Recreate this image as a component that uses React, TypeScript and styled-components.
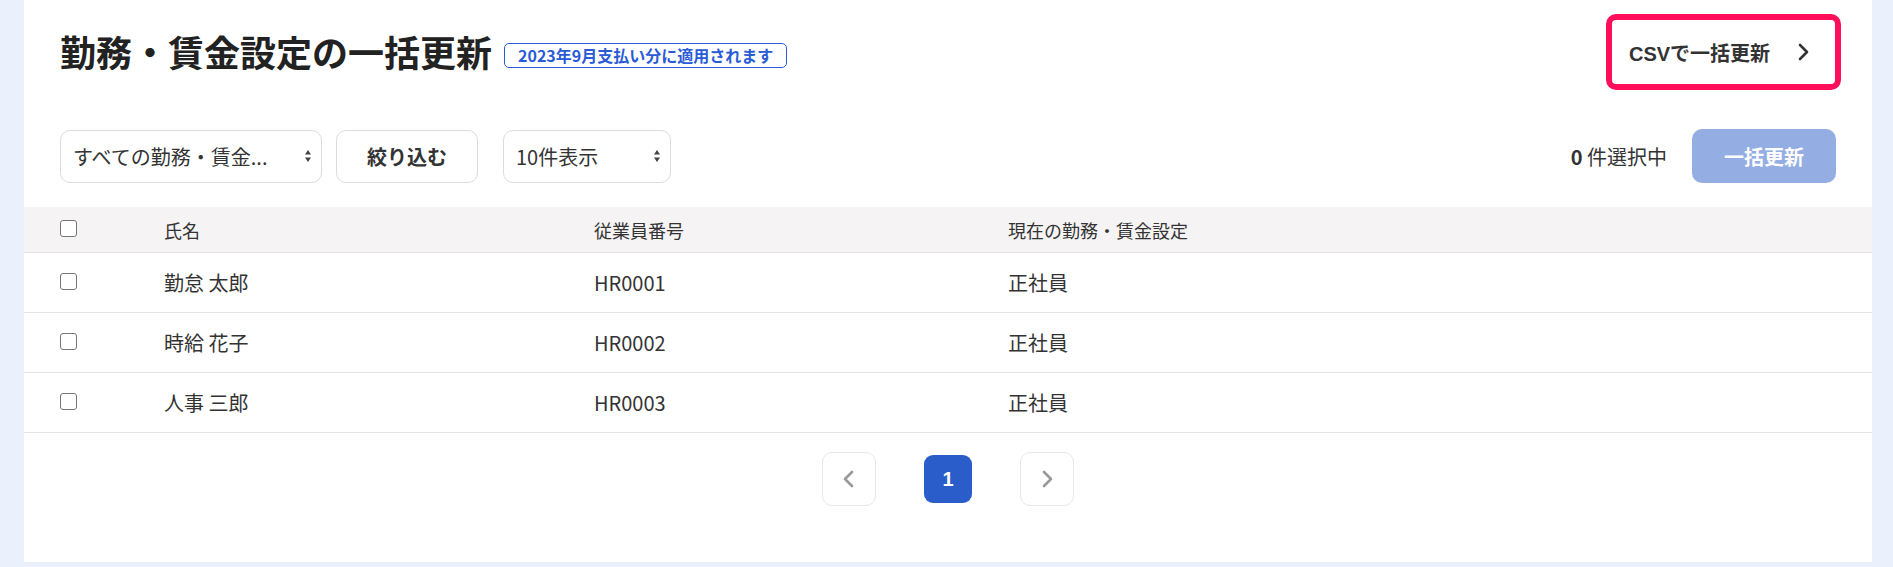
import styled, { createGlobalStyle } from 'styled-components';

const GlobalStyle = createGlobalStyle`
  body {
    margin: 0;
    background: #eaf1fc;
    font-family: 'Noto Sans CJK JP', 'Noto Sans', sans-serif;
    color: #333;
  }
`;

const employees = [
  { name: '勤怠 太郎', code: 'HR0001', setting: '正社員' },
  { name: '時給 花子', code: 'HR0002', setting: '正社員' },
  { name: '人事 三郎', code: 'HR0003', setting: '正社員' },
];

const SortIcon = () => (
  <svg width="8" height="14" viewBox="0 0 8 14">
    <path d="M4 1 L7 5.5 H1 Z" fill="#444" />
    <path d="M4 13 L7 8.5 H1 Z" fill="#444" />
  </svg>
);

const Chevron = ({ dir, color, w }: { dir: 'left' | 'right'; color: string; w: number }) => (
  <svg width="12" height="18" viewBox="0 0 12 18">
    <path
      d={dir === 'right' ? 'M3 2 L10 9 L3 16' : 'M9 2 L2 9 L9 16'}
      fill="none"
      stroke={color}
      strokeWidth={w}
      strokeLinecap="round"
      strokeLinejoin="round"
    />
  </svg>
);

const App = () => {
  return (
    <>
      <GlobalStyle />
      <Page>
        <Panel>
          <Header>
            <TitleBox>
              <Title>勤務・賃金設定の一括更新</Title>
              <Badge>2023年9月支払い分に適用されます</Badge>
            </TitleBox>
            <CsvButton>
              CSVで一括更新
              <Chevron dir="right" color="#333" w={2.6} />
            </CsvButton>
          </Header>

          <Toolbar>
            <Filters>
              <SelectBox $width={262}>
                <span>すべての勤務・賃金...</span>
                <SortIcon />
              </SelectBox>
              <FilterButton>絞り込む</FilterButton>
              <SelectBox $width={168} $last>
                <span>10件表示</span>
                <SortIcon />
              </SelectBox>
            </Filters>
            <Actions>
              <Count>
                <b>0</b> 件選択中
              </Count>
              <UpdateButton disabled>一括更新</UpdateButton>
            </Actions>
          </Toolbar>

          <Table>
            <HeadRow>
              <CheckCell>
                <Check />
              </CheckCell>
              <HeadCell>氏名</HeadCell>
              <HeadCell>従業員番号</HeadCell>
              <HeadCell>現在の勤務・賃金設定</HeadCell>
            </HeadRow>
            {employees.map((e) => (
              <Row key={e.code}>
                <CheckCell>
                  <Check />
                </CheckCell>
                <Cell>{e.name}</Cell>
                <Cell>{e.code}</Cell>
                <Cell>{e.setting}</Cell>
              </Row>
            ))}
          </Table>

          <Pagination>
            <PageArrow>
              <Chevron dir="left" color="#999" w={2.6} />
            </PageArrow>
            <PageNumber>1</PageNumber>
            <PageArrow>
              <Chevron dir="right" color="#999" w={2.6} />
            </PageArrow>
          </Pagination>
        </Panel>
      </Page>
    </>
  );
};

const Page = styled.div`
  padding: 0 21px 5px 24px;
`;

const Panel = styled.main`
  background: #fff;
  height: 562px;
  box-sizing: border-box;
  padding-top: 20px;
`;

const Header = styled.header`
  display: flex;
  justify-content: space-between;
  align-items: center;
  height: 64px;
  padding: 0 37px 0 36px;
`;

const TitleBox = styled.div`
  display: flex;
  align-items: center;
  gap: 12px;
`;

const Title = styled.h1`
  margin: 0;
  font-size: 36px;
  font-weight: 700;
  color: #222;
  line-height: 1.2;
`;

const Badge = styled.span`
  border: 1px solid #2a5bd7;
  border-radius: 5px;
  color: #2a5bd7;
  font-size: 16px;
  font-weight: 700;
  line-height: 23px;
  padding: 0 13px;
  margin-top: 6px;
`;

const CsvButton = styled.button`
  display: flex;
  align-items: center;
  gap: 27px;
  height: 64px;
  width: 223px;
  box-sizing: border-box;
  padding: 0 20px 0 17px;
  background: #fff;
  border: none;
  outline: 6px solid #ff0f5b;
  border-radius: 4px;
  font-family: 'Liberation Sans', 'Noto Sans CJK JP', sans-serif;
  font-size: 20px;
  font-weight: 700;
  color: #333;
  white-space: nowrap;
  cursor: pointer;
`;

const Toolbar = styled.div`
  display: flex;
  justify-content: space-between;
  align-items: center;
  margin-top: 45px;
  padding: 0 36px;
  height: 54px;
`;

const Filters = styled.div`
  display: flex;
  align-items: center;
`;

const SelectBox = styled.div<{ $width: number; $last?: boolean }>`
  display: flex;
  align-items: center;
  justify-content: space-between;
  width: ${({ $width }) => $width}px;
  height: 53px;
  box-sizing: border-box;
  padding: 0 9px 0 12px;
  margin-right: ${({ $last }) => ($last ? 0 : 14)}px;
  border: 1px solid #dcdcdc;
  border-radius: 10px;
  font-size: 20px;
  color: #333;
  white-space: nowrap;
  & svg {
    flex-shrink: 0;
  }
`;

const FilterButton = styled.button`
  width: 142px;
  height: 53px;
  margin-right: 25px;
  background: #fff;
  border: 1px solid #dcdcdc;
  border-radius: 10px;
  font-family: inherit;
  font-size: 20px;
  font-weight: 700;
  color: #333;
`;

const Actions = styled.div`
  display: flex;
  align-items: center;
  gap: 25px;
`;

const Count = styled.span`
  font-size: 20px;
  color: #333;
  & b {
    font-weight: 700;
  }
`;

const UpdateButton = styled.button`
  width: 144px;
  height: 54px;
  border: none;
  border-radius: 10px;
  background: #94aee3;
  color: #fff;
  font-family: inherit;
  font-size: 20px;
  font-weight: 700;
`;

const Table = styled.div`
  margin-top: 24px;
`;

const HeadRow = styled.div`
  display: grid;
  grid-template-columns: 140px 430px 414px 1fr;
  align-items: center;
  height: 45px;
  background: #f5f3f4;
  border-bottom: 1px solid #e3e3e3;
`;

const Row = styled(HeadRow)`
  height: 59px;
  background: #fff;
`;

const CheckCell = styled.div`
  padding-left: 36px;
  display: flex;
  align-items: center;
`;

const Check = styled.span`
  display: block;
  width: 17px;
  height: 17px;
  box-sizing: border-box;
  border: 1.5px solid #767676;
  border-radius: 3px;
  background: #fff;
  margin-top: -2px;
`;

const HeadCell = styled.div`
  font-size: 18px;
  color: #333;
`;

const Cell = styled.div`
  font-size: 20px;
  color: #333;
`;

const Pagination = styled.nav`
  display: flex;
  justify-content: center;
  align-items: center;
  gap: 48px;
  padding-top: 19px;
`;

const PageArrow = styled.button`
  display: flex;
  align-items: center;
  justify-content: center;
  width: 54px;
  height: 54px;
  background: #fff;
  border: 1px solid #e8e8e8;
  border-radius: 10px;
`;

const PageNumber = styled.button`
  width: 48px;
  height: 48px;
  border: none;
  border-radius: 9px;
  background: #2a5cca;
  color: #fff;
  font-family: 'Liberation Sans', Arial, sans-serif;
  font-size: 20px;
  font-weight: 700;
`;

export default App;
